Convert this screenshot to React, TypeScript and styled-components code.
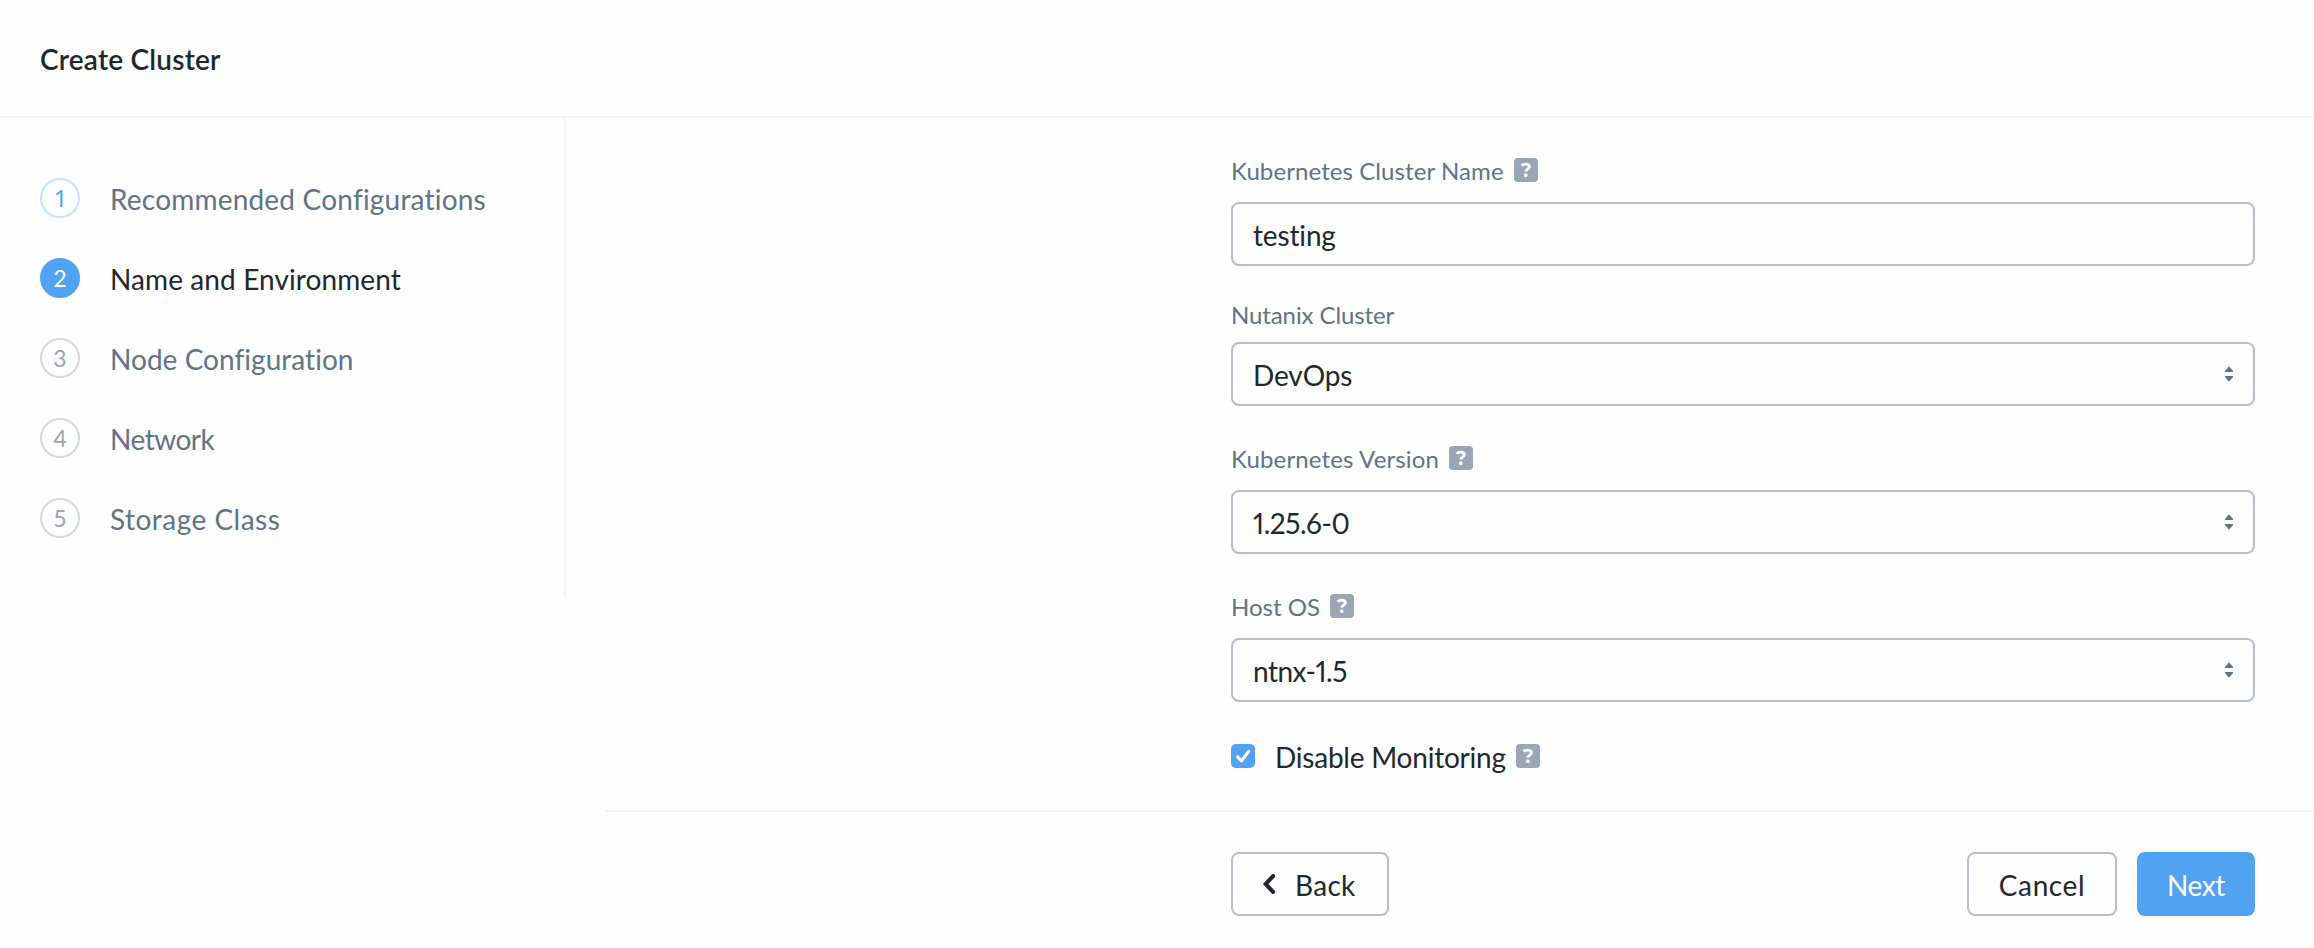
import React, { useState } from 'react';
import styled, { createGlobalStyle, css } from 'styled-components';

const colors = {
  text: '#22272e',
  muted: '#627386',
  faint: '#9aa5b5',
  border: '#b8bfca',
  ring: '#d3d8de',
  ringDone: '#c4e3fe',
  line: '#f2f3f4',
  primary: '#51a2f0',
  surface: '#fefefe',
};

const GlobalStyle = createGlobalStyle`
  *, *::before, *::after { box-sizing: border-box; }
  body {
    margin: 0;
    background: ${colors.surface};
    color: ${colors.text};
    font-family: Lato, 'Open Sans', sans-serif;
    font-variant-ligatures: none;
    font-variant-numeric: proportional-nums;
  }
  button, input { font: inherit; color: inherit; }
`;

const Page = styled.div`
  display: flex;
  flex-direction: column;
  height: 948px;
  overflow: hidden;
`;

const Header = styled.header`
  display: flex;
  align-items: center;
  height: 118px;
  padding: 2px 40px 0;
  border-bottom: 2px solid ${colors.line};
`;

const Title = styled.h1`
  margin: 0;
  font-size: 28px;
  line-height: 34px;
  font-weight: 600;
  letter-spacing: 0.2px;
`;

const Body = styled.div`
  display: flex;
  flex: 1;
  align-items: flex-start;
`;

const Steps = styled.ol`
  display: flex;
  flex-direction: column;
  flex: none;
  gap: 40px;
  width: 566px;
  margin: 0;
  padding: 60px 40px;
  list-style: none;
  border-right: 2px solid ${colors.line};
`;

type StepState = 'done' | 'current' | 'todo';

const Step = styled.li<{ $state: StepState }>`
  display: flex;
  align-items: center;
  gap: 30px;
  height: 40px;
  color: ${(p) => (p.$state === 'current' ? colors.text : colors.muted)};
`;

const StepLabel = styled.span<{ $tracking: number }>`
  padding-top: 2px;
  font-size: 28px;
  line-height: 34px;
  letter-spacing: ${(p) => p.$tracking}px;
`;

const bubbleStates = {
  done: css`border-color: ${colors.ringDone}; color: ${colors.primary};`,
  current: css`border-color: ${colors.primary}; background: ${colors.primary}; color: #fff;`,
  todo: css`border-color: ${colors.ring}; color: ${colors.faint};`,
};

const StepNumber = styled.span<{ $state: StepState }>`
  display: flex;
  align-items: center;
  justify-content: center;
  width: 40px;
  height: 40px;
  border: 2px solid;
  border-radius: 50%;
  font-size: 23px;
  line-height: 34px;
  ${(p) => bubbleStates[p.$state]}
`;

const Main = styled.main`
  display: flex;
  flex-direction: column;
  flex: 1;
  margin-left: 40px;
`;

const Form = styled.div`
  display: flex;
  flex-direction: column;
  height: 692px;
  padding: 40px 59px 0 625px;
`;

const Field = styled.div<{ $after: number }>`
  display: flex;
  flex-direction: column;
  margin-bottom: ${(p) => p.$after}px;
`;

const LabelRow = styled.div<{ $gap: number }>`
  display: flex;
  align-items: center;
  gap: 10px;
  height: 24px;
  margin-bottom: ${(p) => p.$gap}px;
`;

const Label = styled.label<{ $tracking: number }>`
  padding-top: 2px;
  font-size: 24px;
  line-height: 24px;
  color: ${colors.muted};
  letter-spacing: ${(p) => p.$tracking}px;
`;

const control = css`
  width: 100%;
  height: 64px;
  padding: 2px 20px 0;
  border: 2px solid ${colors.border};
  border-radius: 8px;
  background: ${colors.surface};
  font-size: 28px;
  line-height: 34px;
  outline: none;
`;

const TextInput = styled.input<{ $tracking: number }>`
  ${control}
  letter-spacing: ${(p) => p.$tracking}px;
`;

const Select = styled.button`
  ${control}
  display: flex;
  align-items: center;
  justify-content: space-between;
  padding-top: 0;
`;

const SelectValue = styled.span<{ $tracking: number }>`
  padding-top: 2px;
  letter-spacing: ${(p) => p.$tracking}px;
`;

const CheckRow = styled.label`
  display: flex;
  align-items: center;
  height: 24px;
  margin-top: 2px;
`;

const CheckBox = styled.span`
  display: flex;
  width: 24px;
  height: 24px;
  border-radius: 5px;
  background: ${colors.primary};
`;

const CheckText = styled.span`
  margin: 0 10px 0 20px;
  padding-top: 2px;
  font-size: 28px;
  line-height: 34px;
  letter-spacing: -0.22px;
`;

const Footer = styled.footer`
  display: flex;
  gap: 20px;
  height: 138px;
  padding: 40px 59px 0 625px;
  border-top: 2px solid ${colors.line};
`;

const Button = styled.button<{ $width: number; $primary?: boolean; $tracking?: number }>`
  display: flex;
  align-items: center;
  justify-content: center;
  width: ${(p) => p.$width}px;
  height: 64px;
  padding: 2px 0 0;
  border: 2px solid ${(p) => (p.$primary ? colors.primary : colors.border)};
  border-radius: 8px;
  background: ${(p) => (p.$primary ? colors.primary : colors.surface)};
  color: ${(p) => (p.$primary ? '#fff' : colors.text)};
  font-size: 28px;
  line-height: 34px;
  letter-spacing: ${(p) => p.$tracking ?? 0}px;
`;

const BackButton = styled(Button)`
  justify-content: flex-start;
  gap: 19px;
  margin-right: auto;
  padding-left: 29px;

  svg { margin-bottom: 2px; }
`;

const HelpIcon = () => (
  <svg width="24" height="24" viewBox="0 0 24 24" fill="none" aria-label="Help">
    <rect width="24" height="24" rx="4" fill={colors.faint} />
    <path
      d="M7.6 7.6C8.7 6.6 10 6.1 11.6 6.1c2.2 0 3.7 1 3.7 2.6 0 2.3-3.3 2.4-3.6 4.8"
      stroke="#fff"
      strokeWidth="2.9"
    />
    <rect x="10" y="15.6" width="3.4" height="3.4" rx="1" fill="#fff" />
  </svg>
);

const SortIcon = () => (
  <svg width="8" height="16" viewBox="0 0 8 16" fill={colors.muted}>
    <path d="M4 0.2 8 5v1H0V5z" />
    <path d="M4 15.8 8 11v-1H0v1z" />
  </svg>
);

const CheckIcon = () => (
  <svg width="24" height="24" viewBox="0 0 24 24" fill="none">
    <path d="M6.6 12.8l3.9 4 7.2-9.4" stroke="#fff" strokeWidth="3.2" strokeLinecap="round" strokeLinejoin="round" />
  </svg>
);

const ChevronIcon = () => (
  <svg width="14" height="20" viewBox="0 0 14 20" fill="none">
    <path d="M11.2 2 3.6 10l7.6 8" stroke={colors.text} strokeWidth="4" strokeLinecap="round" />
  </svg>
);

const steps: { label: string; state: StepState; tracking: number }[] = [
  { label: 'Recommended Configurations', state: 'done', tracking: 0.2 },
  { label: 'Name and Environment', state: 'current', tracking: 0.1 },
  { label: 'Node Configuration', state: 'todo', tracking: 0.04 },
  { label: 'Network', state: 'todo', tracking: -0.5 },
  { label: 'Storage Class', state: 'todo', tracking: 0.48 },
];

const selects = [
  { label: 'Nutanix Cluster', value: 'DevOps', help: false, labelTracking: -0.1, tracking: -0.1 },
  { label: 'Kubernetes Version', value: '1.25.6-0', help: true, labelTracking: 0.15, tracking: -0.45 },
  { label: 'Host OS', value: 'ntnx-1.5', help: true, labelTracking: 0, tracking: -0.5 },
];

export default function App() {
  const [name, setName] = useState('testing');

  return (
    <>
      <GlobalStyle />
      <Page>
        <Header>
          <Title>Create Cluster</Title>
        </Header>
        <Body>
          <Steps>
            {steps.map((step, i) => (
              <Step key={step.label} $state={step.state}>
                <StepNumber $state={step.state}>{i + 1}</StepNumber>
                <StepLabel $tracking={step.tracking}>{step.label}</StepLabel>
              </Step>
            ))}
          </Steps>
          <Main>
            <Form>
              <Field $after={36}>
                <LabelRow $gap={20}>
                  <Label htmlFor="cluster-name" $tracking={0.09}>Kubernetes Cluster Name</Label>
                  <HelpIcon />
                </LabelRow>
                <TextInput
                  id="cluster-name"
                  $tracking={-0.15}
                  value={name}
                  onChange={(e) => setName(e.target.value)}
                />
              </Field>
              {selects.map((s) => (
                <Field key={s.label} $after={40}>
                  <LabelRow $gap={s.help ? 20 : 16}>
                    <Label $tracking={s.labelTracking}>{s.label}</Label>
                    {s.help && <HelpIcon />}
                  </LabelRow>
                  <Select type="button">
                    <SelectValue $tracking={s.tracking}>{s.value}</SelectValue>
                    <SortIcon />
                  </Select>
                </Field>
              ))}
              <CheckRow>
                <CheckBox role="checkbox" aria-checked="true">
                  <CheckIcon />
                </CheckBox>
                <CheckText>Disable Monitoring</CheckText>
                <HelpIcon />
              </CheckRow>
            </Form>
            <Footer>
              <BackButton type="button" $width={158} $tracking={0.3}>
                <ChevronIcon />
                Back
              </BackButton>
              <Button type="button" $width={150} $tracking={0.6}>Cancel</Button>
              <Button type="button" $width={118} $primary $tracking={-0.4}>Next</Button>
            </Footer>
          </Main>
        </Body>
      </Page>
    </>
  );
}
